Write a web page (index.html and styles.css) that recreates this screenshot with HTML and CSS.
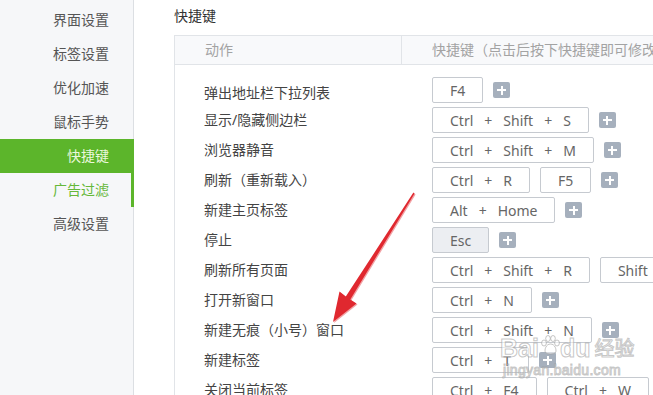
FILE: index.html
```html
<!DOCTYPE html>
<html lang="zh-CN">
<head>
    <meta charset="UTF-8">
    <meta name="viewport" content="width=device-width, initial-scale=1.0">
    <title>快捷键设置</title>
    <link rel="stylesheet" href="styles.css">
</head>
<body>
    <div class="page">
        <aside class="sidebar">
            <ul class="menu">
                <li>界面设置</li>
                <li>标签设置</li>
                <li>优化加速</li>
                <li>鼠标手势</li>
                <li class="active">快捷键</li>
                <li class="hover">广告过滤</li>
                <li>高级设置</li>
            </ul>
        </aside>

        <main class="content">
            <h2 class="title">快捷键</h2>

            <div class="shortcuts">
                <div class="head">
                    <div class="h-action">动作</div>
                    <div class="h-keys">快捷键（点击后按下快捷键即可修改）</div>
                </div>

                <div class="body">
                    <div class="row first">
                        <div class="action">弹出地址栏下拉列表</div>
                        <div class="keys">
                            <span class="key"><span>F4</span></span>
                            <span class="add"></span>
                        </div>
                    </div>
                    <div class="row">
                        <div class="action">显示/隐藏侧边栏</div>
                        <div class="keys">
                            <span class="key"><span>Ctrl</span><span>+</span><span>Shift</span><span>+</span><span>S</span></span>
                            <span class="add"></span>
                        </div>
                    </div>
                    <div class="row">
                        <div class="action">浏览器静音</div>
                        <div class="keys">
                            <span class="key"><span>Ctrl</span><span>+</span><span>Shift</span><span>+</span><span>M</span></span>
                            <span class="add"></span>
                        </div>
                    </div>
                    <div class="row">
                        <div class="action">刷新（重新载入）</div>
                        <div class="keys">
                            <span class="key"><span>Ctrl</span><span>+</span><span>R</span></span>
                            <span class="key"><span>F5</span></span>
                            <span class="add"></span>
                        </div>
                    </div>
                    <div class="row">
                        <div class="action">新建主页标签</div>
                        <div class="keys">
                            <span class="key"><span>Alt</span><span>+</span><span>Home</span></span>
                            <span class="add"></span>
                        </div>
                    </div>
                    <div class="row">
                        <div class="action">停止</div>
                        <div class="keys">
                            <span class="key editing"><span>Esc</span></span>
                            <span class="add"></span>
                        </div>
                    </div>
                    <div class="row">
                        <div class="action">刷新所有页面</div>
                        <div class="keys">
                            <span class="key"><span>Ctrl</span><span>+</span><span>Shift</span><span>+</span><span>R</span></span>
                            <span class="key"><span>Shift</span><span>+</span><span>F5</span></span>
                            <span class="add"></span>
                        </div>
                    </div>
                    <div class="row">
                        <div class="action">打开新窗口</div>
                        <div class="keys">
                            <span class="key"><span>Ctrl</span><span>+</span><span>N</span></span>
                            <span class="add"></span>
                        </div>
                    </div>
                    <div class="row">
                        <div class="action">新建无痕（小号）窗口</div>
                        <div class="keys">
                            <span class="key"><span>Ctrl</span><span>+</span><span>Shift</span><span>+</span><span>N</span></span>
                            <span class="add"></span>
                        </div>
                    </div>
                    <div class="row">
                        <div class="action">新建标签</div>
                        <div class="keys">
                            <span class="key"><span>Ctrl</span><span>+</span><span>T</span></span>
                            <span class="add"></span>
                        </div>
                    </div>
                    <div class="row">
                        <div class="action">关闭当前标签</div>
                        <div class="keys">
                            <span class="key"><span>Ctrl</span><span>+</span><span>F4</span></span>
                            <span class="key"><span>Ctrl</span><span>+</span><span>W</span></span>
                            <span class="add"></span>
                        </div>
                    </div>
                </div>
            </div>
        </main>
    </div>

    <!-- annotation arrow drawn over the page -->
    <svg class="arrow" width="653" height="395" viewBox="0 0 653 395">
        <defs>
            <filter id="soft" x="-20%" y="-20%" width="140%" height="140%">
                <feGaussianBlur stdDeviation="0.6"/>
            </filter>
        </defs>
        <polygon points="414.6,193.4 350.3,299.6 356.5,303.5 333,322 339.5,291.5 345.8,296.6 413.4,192.6"
                 fill="#f2a3a6" filter="url(#soft)" transform="translate(1,1)"/>
        <polygon points="414.6,193.4 350.3,299.6 356.5,303.5 333,322 339.5,291.5 345.8,296.6 413.4,192.6"
                 fill="#e0282f"/>
    </svg>

    <!-- site watermark -->
    <div class="watermark">
        <div class="wm-logo">Bai<svg class="paw" width="20" height="20" viewBox="0 0 20 20">
                <ellipse cx="4" cy="8" rx="2.4" ry="3"/>
                <ellipse cx="8" cy="3.5" rx="2.3" ry="3"/>
                <ellipse cx="13" cy="3.5" rx="2.3" ry="3"/>
                <ellipse cx="17" cy="8" rx="2.4" ry="3"/>
                <path d="M10.5 9 C6 9 4 15 5.5 17.5 C7 19.5 14 19.5 15.5 17.5 C17 15 15 9 10.5 9 Z"/>
            </svg>du<span class="wm-cn">经验</span></div>
        <div class="wm-url">jingyan.baidu.com</div>
    </div>
</body>
</html>
```

FILE: styles.css
```css
html, body {
    margin: 0;
    padding: 0;
}

body {
    width: 653px;
    height: 395px;
    overflow: hidden;
    position: relative;
    background: #fff;
    font-family: "Noto Sans", "Noto Sans CJK SC", sans-serif;
    font-size: 14px;
    color: #444;
}

.page {
    display: flex;
    height: 395px;
}

/* left menu */
.sidebar {
    width: 133px;
    flex-shrink: 0;
    background: #f6f7f9;
    border-right: 1px solid #dcdfe3;
}

.menu {
    list-style: none;
    margin: 0;
    padding: 3px 0 0;
}

.menu li {
    height: 34px;
    line-height: 34px;
    padding-right: 24px;
    text-align: right;
    color: #555;
    font-size: 14px;
}

.menu li.active {
    background: #5cb52b;
    color: #eaf8dc;
    margin-right: -1px;
    padding-right: 25px;
}

.menu li.hover {
    color: #66b83a;
    margin-right: -1px;
    padding-right: 25px;
    box-shadow: inset -3px 0 0 #5cb52b;
}

/* content */
.content {
    flex: 1;
    padding-left: 40px;
    min-width: 0;
}

.title {
    margin: 0;
    padding-top: 6px;
    font-size: 14px;
    font-weight: normal;
    line-height: 20px;
    color: #333;
}

.shortcuts {
    margin-top: 9px;
    width: 720px;
    border-left: 1px solid #e1e4e8;
    border-top: 1px solid #e1e4e8;
}

.head {
    display: grid;
    grid-template-columns: 227px 1fr;
    height: 29px;
    background: #f8f9fb;
    border-bottom: 1px solid #e1e4e8;
    line-height: 28px;
    color: #a3a3a3;
    box-sizing: border-box;
}

.h-action {
    padding-left: 30px;
    border-right: 1px solid #e1e4e8;
    box-sizing: border-box;
}

.h-keys {
    padding-left: 30px;
    white-space: nowrap;
}

.body {
    padding-top: 10px;
}

.row {
    display: grid;
    grid-template-columns: 227px 1fr;
    align-items: center;
    padding: 2px 0;
}

.action {
    padding-left: 29px;
    line-height: 20px;
    color: #444;
}

.row.first .action {
    align-self: end;
}

.keys {
    display: flex;
    align-items: center;
    gap: 10px;
    padding-left: 30px;
    white-space: nowrap;
}

.key {
    display: inline-flex;
    align-items: center;
    gap: 11px;
    height: 26px;
    box-sizing: border-box;
    padding: 0 17px;
    border: 1px solid #c6cad0;
    border-radius: 2px;
    background: #fff;
    font-size: 14px;
    color: #666;
    flex-shrink: 0;
}

.key.editing {
    background: #eceef2;
}

.add {
    position: relative;
    width: 17px;
    height: 16px;
    border-radius: 2px;
    background: #a6b0bd;
    flex-shrink: 0;
}

.add::before,
.add::after {
    content: "";
    position: absolute;
    background: #fff;
}

.add::before {
    left: 4px;
    top: 7px;
    width: 9px;
    height: 2px;
}

.add::after {
    left: 7.5px;
    top: 3.5px;
    width: 2px;
    height: 9px;
}

/* overlays */
.arrow {
    position: absolute;
    left: 0;
    top: 0;
    pointer-events: none;
}

.watermark {
    position: absolute;
    left: 500px;
    top: 334px;
    pointer-events: none;
    color: rgba(255, 255, 255, 0.55);
    -webkit-text-stroke: 1px rgba(150, 150, 150, 0.55);
}

.wm-logo {
    display: flex;
    align-items: center;
    font-family: "Liberation Sans", sans-serif;
    font-weight: bold;
    font-size: 25px;
    line-height: 28px;
}

.paw {
    fill: rgba(255, 255, 255, 0.55);
    stroke: rgba(150, 150, 150, 0.55);
    stroke-width: 1;
    margin: -6px 0 0 1px;
}

.wm-cn {
    margin-left: 4px;
    font-family: "Noto Sans CJK SC", sans-serif;
    font-size: 20px;
    font-weight: normal;
}

.wm-url {
    font-family: "Liberation Sans", sans-serif;
    font-size: 14px;
    line-height: 16px;
    margin-left: 3px;
    letter-spacing: 0.3px;
}
```
